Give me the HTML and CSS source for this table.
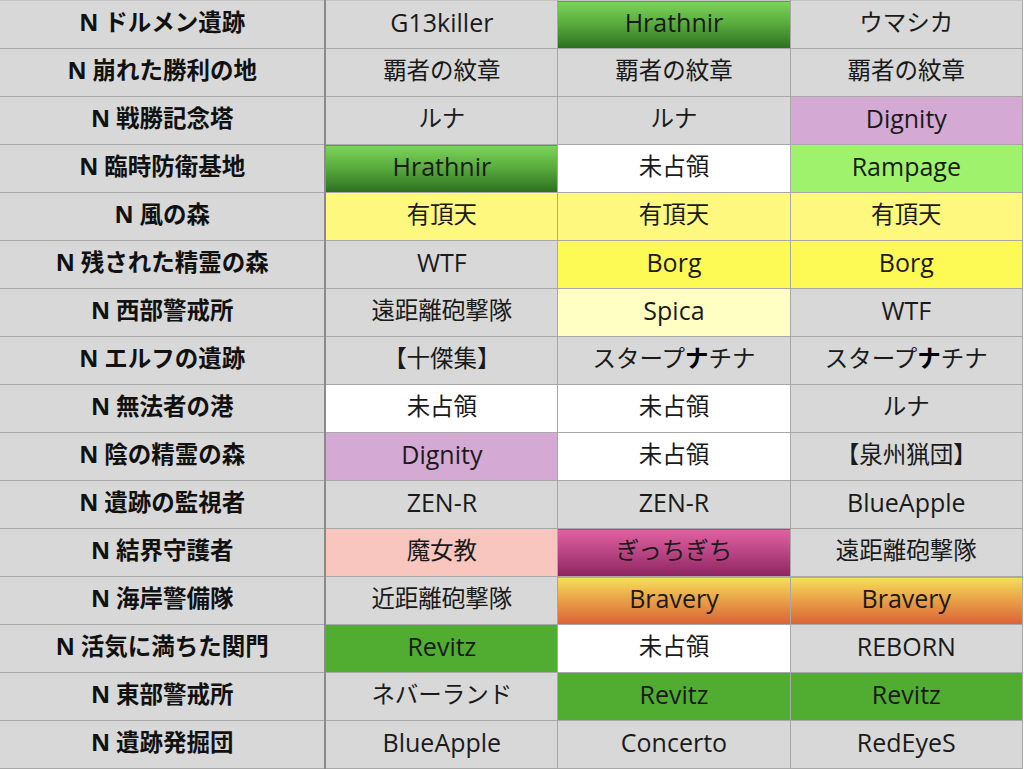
FILE: index.html
```html
<!DOCTYPE html>
<html lang="ja">
<head>
  <meta charset="UTF-8">
  <title>拠点占領状況</title>
  <link rel="stylesheet" href="styles.css">
</head>
<body>
<table class="sheet">
  <colgroup>
    <col class="col-name">
    <col class="col-guild">
    <col class="col-guild">
    <col class="col-guild">
  </colgroup>
  <tbody>
    <tr><th>N ドルメン遺跡</th><td class="en">G13killer</td><td class="en c-green-grad">Hrathnir</td><td>ウマシカ</td></tr>
    <tr><th>N 崩れた勝利の地</th><td>覇者の紋章</td><td>覇者の紋章</td><td>覇者の紋章</td></tr>
    <tr><th>N 戦勝記念塔</th><td>ルナ</td><td>ルナ</td><td class="en c-lilac">Dignity</td></tr>
    <tr><th>N 臨時防衛基地</th><td class="en c-green-grad">Hrathnir</td><td class="c-white">未占領</td><td class="en c-lime">Rampage</td></tr>
    <tr><th>N 風の森</th><td class="c-yellow">有頂天</td><td class="c-yellow">有頂天</td><td class="c-yellow">有頂天</td></tr>
    <tr><th>N 残された精霊の森</th><td class="en">WTF</td><td class="en c-lemon">Borg</td><td class="en c-lemon">Borg</td></tr>
    <tr><th>N 西部警戒所</th><td>遠距離砲撃隊</td><td class="en c-cream">Spica</td><td class="en">WTF</td></tr>
    <tr><th>N エルフの遺跡</th><td>【十傑集】</td><td>スタープ<b>ナ</b>チナ</td><td>スタープ<b>ナ</b>チナ</td></tr>
    <tr><th>N 無法者の港</th><td class="c-white">未占領</td><td class="c-white">未占領</td><td>ルナ</td></tr>
    <tr><th>N 陰の精霊の森</th><td class="en c-lilac">Dignity</td><td class="c-white">未占領</td><td>【泉州猟団】</td></tr>
    <tr><th>N 遺跡の監視者</th><td class="en">ZEN-R</td><td class="en">ZEN-R</td><td class="en">BlueApple</td></tr>
    <tr><th>N 結界守護者</th><td class="c-pink">魔女教</td><td class="c-magenta-grad">ぎっちぎち</td><td>遠距離砲撃隊</td></tr>
    <tr><th>N 海岸警備隊</th><td>近距離砲撃隊</td><td class="en c-orange-grad">Bravery</td><td class="en c-orange-grad">Bravery</td></tr>
    <tr><th>N 活気に満ちた関門</th><td class="en c-green">Revitz</td><td class="c-white">未占領</td><td class="en">REBORN</td></tr>
    <tr><th>N 東部警戒所</th><td>ネバーランド</td><td class="en c-green">Revitz</td><td class="en c-green">Revitz</td></tr>
    <tr><th>N 遺跡発掘団</th><td class="en">BlueApple</td><td class="en">Concerto</td><td class="en">RedEyeS</td></tr>
  </tbody>
</table>
</body>
</html>
```

FILE: styles.css
```css
* {
  margin: 0;
  padding: 0;
  box-sizing: border-box;
}

body {
  background: #ffffff;
  font-family: "Open Sans", "Noto Sans CJK JP", sans-serif;
  overflow: hidden;
}

.sheet {
  border-collapse: collapse;
  table-layout: fixed;
  width: 1023px;
  color: #1a1a1a;
  font-size: 23.5px;
}

.col-name {
  width: 325px;
}

.col-guild {
  width: 232px;
}

.sheet th,
.sheet td {
  height: 48px;
  padding-bottom: 3px;
  border: 1px solid #a8a8a8;
  background: #d8d8d8;
  text-align: center;
  vertical-align: middle;
  white-space: nowrap;
  line-height: 1;
}

.sheet th {
  font-weight: bold;
  color: #111;
  border-left: none;
  border-right: 2px solid #8a8a8a;
}

.sheet td {
  font-weight: normal;
}

/* latin names run wider in the original sheet */
.sheet td.en {
  font-size: 25px;
  padding-bottom: 4px;
}

.sheet tr:first-child th,
.sheet tr:first-child td {
  border-top-color: #c4c4c4;
}

.sheet b {
  font-weight: bold;
  color: #000;
}

/* cell fills */
.c-white {
  background: #ffffff !important;
}

.c-lilac {
  background: #d4a9d4 !important;
}

.c-lime {
  background: #9ff26b !important;
}

.c-yellow {
  background: #fef87e !important;
}

.c-lemon {
  background: #fefa55 !important;
}

.c-cream {
  background: #ffffc4 !important;
}

.c-green {
  background: #51ac32 !important;
}

.c-pink {
  background: #f8c5bf !important;
}

.c-green-grad {
  background: linear-gradient(180deg, #7bd55a 0%, #56a83b 50%, #2c6f1f 100%) !important;
}

.c-magenta-grad {
  background: linear-gradient(180deg, #e062a2 0%, #b84483 50%, #8c2460 100%) !important;
}

.c-orange-grad {
  background: linear-gradient(180deg, #f7df58 0%, #e89e46 50%, #da6237 100%) !important;
}
```
